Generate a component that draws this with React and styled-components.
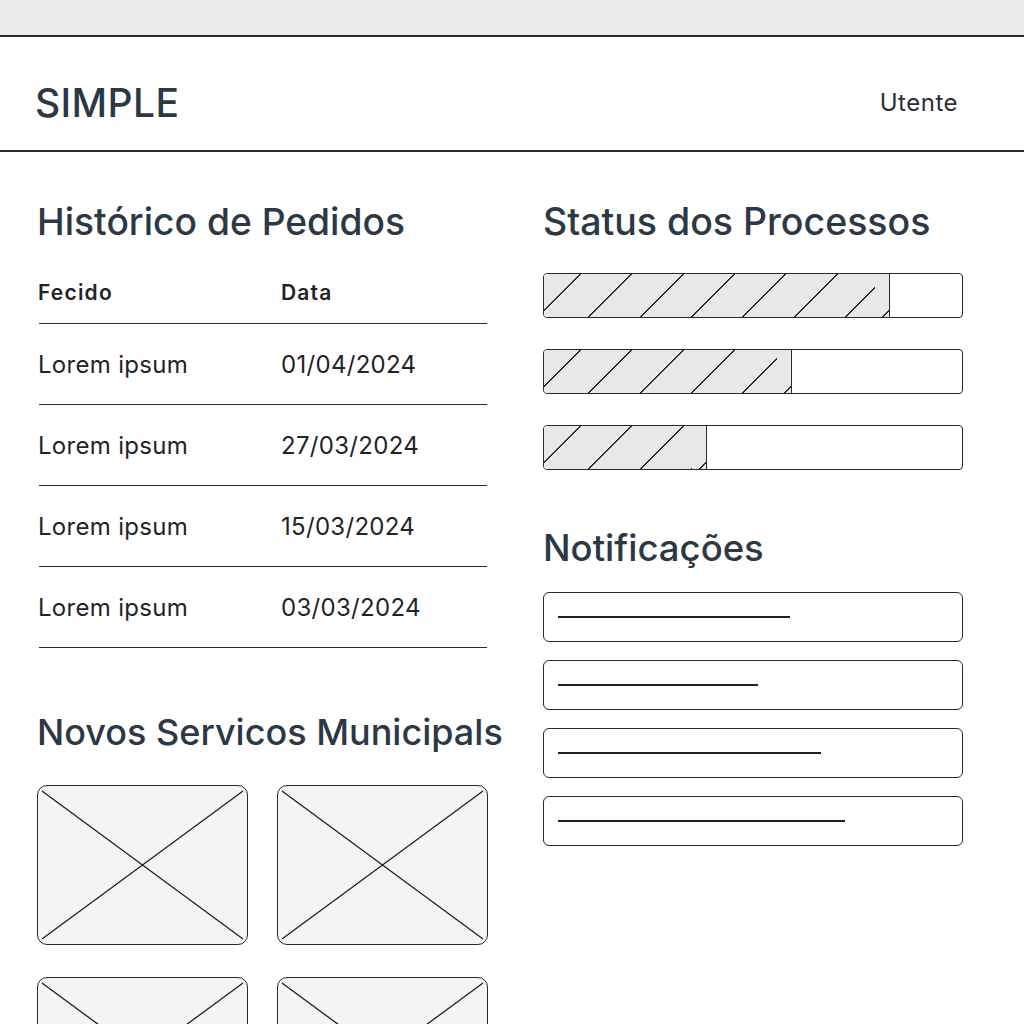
import React from 'react';
import styled, { createGlobalStyle } from 'styled-components';

const GlobalStyle = createGlobalStyle`
  body {
    margin: 0;
    background: #ffffff;
    font-family: 'Inter', 'Noto Sans', sans-serif;
    color: #2c3640;
  }
`;

const Page = styled.div`
  width: 1024px;
  height: 1024px;
  overflow: hidden;
`;

const TopStrip = styled.div`
  height: 35px;
  background: #ebebeb;
  border-bottom: 2px solid #2a2a2a;
`;

const Header = styled.header`
  height: 115px;
  box-sizing: border-box;
  display: flex;
  align-items: center;
  justify-content: space-between;
  padding: 18px 66px 0 35px;
  border-bottom: 2px solid #2a2a2a;
`;

const Brand = styled.div`
  font-size: 39px;
  font-weight: 500;
  letter-spacing: 0.4px;
  color: #2c3844;
`;

const UserLink = styled.div`
  font-size: 24px;
  letter-spacing: 0.5px;
  color: #2a2f35;
`;

const Main = styled.main`
  display: grid;
  grid-template-columns: 453px 420px;
  column-gap: 53px;
  padding: 44px 0 0 37px;
`;

const Column = styled.section`
  display: flex;
  flex-direction: column;
`;

const Heading = styled.h2`
  margin: 0 0 ${({ $gap }) => $gap || 30}px;
  font-size: ${({ $size }) => $size || 36.5}px;
  font-weight: 500;
  line-height: 52px;
  color: #2c3844;
  white-space: nowrap;
`;

const Table = styled.div`
  display: flex;
  flex-direction: column;
  margin-bottom: 58px;
`;

const Row = styled.div`
  display: grid;
  grid-template-columns: 243px 1fr;
  align-items: center;
  height: ${({ $head }) => ($head ? 47 : 80)}px;
  padding-bottom: ${({ $head }) => ($head ? 7 : 0)}px;
  border-bottom: 1.5px solid #2a2a2a;
  font-size: ${({ $head }) => ($head ? 21 : 24)}px;
  font-weight: ${({ $head }) => ($head ? 600 : 400)};
  letter-spacing: ${({ $head }) => ($head ? '1.2px' : '0.3px')};
  color: #1f2428;
  margin-left: 2px;
  width: 448px;
`;

const Cell = styled.span`
  margin-left: -1px;
`;

const Grid = styled.div`
  display: grid;
  grid-template-columns: 211px 211px;
  column-gap: 29px;
  row-gap: 32px;
  margin-top: -4px;
`;

const Placeholder = styled.div`
  height: 158px;
  border: 1.5px solid #2a2a2a;
  border-radius: 10px;
  background: #f4f4f4;
  overflow: hidden;

  svg {
    display: block;
    width: 100%;
    height: 100%;
  }
`;

const Bars = styled.div`
  display: flex;
  flex-direction: column;
  gap: 31px;
  margin-top: 3px;
  margin-bottom: 52px;
`;

const Bar = styled.div`
  height: 45px;
  border: 1.5px solid #2a2a2a;
  border-radius: 4px;
  box-sizing: border-box;
  overflow: hidden;
  display: flex;
`;

const Fill = styled.div`
  height: 100%;
  border-right: 1.5px solid #2a2a2a;
  background-color: #e8e8e8;
  background-image: repeating-linear-gradient(
    135deg,
    transparent 0 35px,
    #2a2a2a 35px 36.3px
  );
  background-position: -14px 0;
`;

const Notices = styled.div`
  display: flex;
  flex-direction: column;
  gap: 18px;
  margin-top: -4px;
`;

const Notice = styled.div`
  height: 50px;
  border: 1.5px solid #2a2a2a;
  border-radius: 6px;
  box-sizing: border-box;
  display: flex;
  align-items: center;
  padding-left: 14px;
`;

const NoticeLine = styled.div`
  height: 1.5px;
  background: #1f1f1f;
`;

const orders = [
  ['Lorem ipsum', '01/04/2024'],
  ['Lorem ipsum', '27/03/2024'],
  ['Lorem ipsum', '15/03/2024'],
  ['Lorem ipsum', '03/03/2024'],
];

const progress = [345, 247, 162];
const notices = [232, 200, 263, 287];

function ImageBox() {
  return (
    <Placeholder>
      <svg viewBox="0 0 211 158" preserveAspectRatio="none">
        <line x1="4" y1="5" x2="207" y2="153" stroke="#1f1f1f" strokeWidth="1.3" />
        <line x1="207" y1="5" x2="4" y2="153" stroke="#1f1f1f" strokeWidth="1.3" />
      </svg>
    </Placeholder>
  );
}

export default function App() {
  return (
    <Page>
      <GlobalStyle />
      <TopStrip />
      <Header>
        <Brand>SIMPLE</Brand>
        <UserLink>Utente</UserLink>
      </Header>
      <Main>
        <Column>
          <Heading $gap={21} $size={37.2}>Histórico de Pedidos</Heading>
          <Table>
            <Row $head>
              <Cell>Fecido</Cell>
              <Cell>Data</Cell>
            </Row>
            {orders.map(([name, date], i) => (
              <Row key={i}>
                <Cell>{name}</Cell>
                <Cell>{date}</Cell>
              </Row>
            ))}
          </Table>
          <Heading $gap={31} $size={36}>Novos Servicos Municipals</Heading>
          <Grid>
            <ImageBox />
            <ImageBox />
            <ImageBox />
            <ImageBox />
          </Grid>
        </Column>
        <Column>
          <Heading $gap={22} $size={37.5}>Status dos Processos</Heading>
          <Bars>
            {progress.map((w, i) => (
              <Bar key={i}>
                <Fill style={{ width: w }} />
              </Bar>
            ))}
          </Bars>
          <Heading $gap={22}>Notificações</Heading>
          <Notices>
            {notices.map((w, i) => (
              <Notice key={i}>
                <NoticeLine style={{ width: w }} />
              </Notice>
            ))}
          </Notices>
        </Column>
      </Main>
    </Page>
  );
}
